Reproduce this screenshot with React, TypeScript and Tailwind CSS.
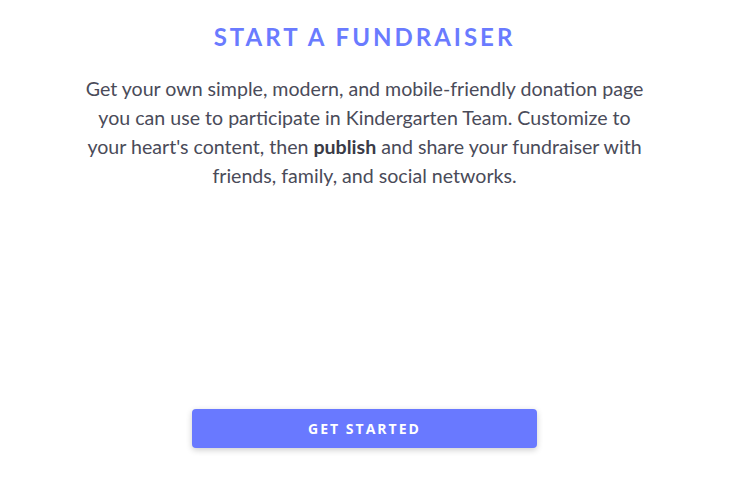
export default function App() {
  return (
    <div className="w-[732px] h-[500px] pr-[3px] bg-white flex flex-col items-center font-['Lato',sans-serif]">
      <h1 className="mt-[22px] text-[24px] leading-[30px] font-bold tracking-[3px] text-[#6a7bff]">
        START A FUNDRAISER
      </h1>
      <p className="mt-[22px] w-[566px] text-center text-[19.6px] leading-[29px] text-[#4a4b59]">
        Get your own simple, modern, and mobile-friendly donation page you can
        use to participate in Kindergarten Team. Customize to your heart's
        content, then <strong className="font-bold text-[#3a3b47]">publish</strong> and
        share your fundraiser with friends, family, and social networks.
      </p>
      <button className="mt-[219px] w-[345px] h-[39px] rounded-[4px] bg-[#6979ff] text-white text-[14px] font-bold tracking-[2px] font-['Open_Sans',sans-serif] shadow-[0_2px_6px_rgba(0,0,0,0.2)]">
        GET STARTED
      </button>
    </div>
  );
}
